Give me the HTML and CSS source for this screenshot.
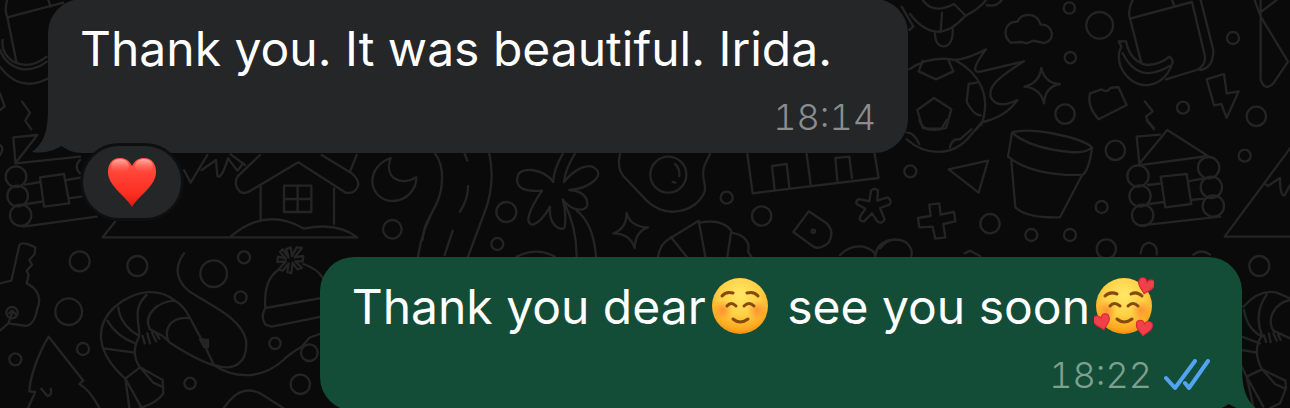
FILE: index.html
```
<!DOCTYPE html>
<html lang="en">
<head>
  <meta charset="UTF-8">
  <meta name="viewport" content="width=device-width, initial-scale=1">
  <title>Chat</title>
  <link rel="stylesheet" href="styles.css">
</head>
<body>
  <!-- doodle wallpaper -->
  <svg class="wallpaper" viewBox="0 0 3870 1224" preserveAspectRatio="xMidYMin slice" aria-hidden="true">
    <!-- left: mug, banana, cabin, snowy house, moon -->
    <g>
      <path d="M22 0Q12 30 22 52L50 190M22 52L190 8M145 0L152 20M8 120Q2 160 40 185Q90 210 140 170M0 150Q20 200 70 208Q110 210 140 185M0 200Q60 280 145 235M0 280L14 320L0 330M66 305L90 338L76 362L94 388"/>
      <path d="M46 485L40 412L112 405L46 490L240 470M75 554L120 546M200 540L245 532M80 612L125 605M205 595L245 590M70 680L290 650M120 532L192 522L208 610L132 620ZM240 480Q220 500 240 520M0 435Q14 445 0 465"/>
      <circle cx="48" cy="530" r="31"/><circle cx="53" cy="588" r="31"/><circle cx="62" cy="646" r="32"/>
      <path d="M552 510L572 548L622 465M605 510L648 480L652 528Q664 540 684 475M684 475L712 512L730 490M692 463L735 495M780 465L712 530Q700 555 720 575Q735 585 755 570L895 487L1035 577Q1065 585 1075 555Q1075 535 1055 520L965 465M782 555V662M1002 565V672M1050 515L1070 465M852 557H934V636H852ZM893 557V636M852 597H934"/>
      <path d="M345 665L308 712H1072Q1010 665 912 686Q800 620 694 708"/>
      <path d="M1172 474C1100 500 1100 585 1165 602C1220 610 1250 565 1249 532C1205 560 1150 535 1172 474Z"/>
      <circle cx="1177" cy="688" r="28"/>
      <path d="M1290 650Q1270 680 1268 720"/>
    </g>
    <!-- top right: turtle, football, stars, clouds, mug -->
    <g transform="translate(2640 0)">
      <path d="M65 20L100 80L88 90M90 42Q170 145 255 48Q300 25 318 0M128 0Q160 45 222 12M186 38L182 96M222 12L258 48M320 15Q350 22 365 0M165 98Q165 138 192 139Q220 136 218 85"/>
      <path d="M88 208Q150 165 225 180Q270 175 318 148Q260 225 305 214L432 184C350 235 325 260 332 290Q350 330 412 300Q380 350 304 368L290 388M225 180C300 220 335 290 304 375M128 182L116 214L168 238L220 214L206 182M112 330L162 294L214 328L198 384Q160 395 128 384ZM290 248L266 252L260 305Q280 345 302 346"/>
      <path d="M392 128C365 105 375 65 412 65C425 38 470 35 482 74C520 70 530 125 490 129L460 122L440 130L424 126Z"/>
      <circle cx="568" cy="24" r="17"/><circle cx="659" cy="76" r="40"/><circle cx="571" cy="173" r="17"/><circle cx="555" cy="342" r="29"/><circle cx="1059" cy="114" r="18"/><circle cx="909" cy="323" r="18"/><circle cx="1129" cy="349" r="29"/>
      <path d="M484 204Q495 250 540 252Q495 260 492 310Q482 265 433 260Q478 250 484 204ZM630 280L665 268Q680 280 692 264L715 261L740 315L656 358Q620 320 630 280ZM794 304L818 334L798 350L804 366L822 388"/>
      <path d="M758 0Q742 30 750 56L936 6M876 0L884 20M750 56L784 188M936 6L974 165Q980 195 950 210L858 238M962 0L1000 150Q1000 205 960 210M716 124H738Q750 185 800 195Q840 195 868 170Q882 180 876 192C850 270 760 280 722 200Q710 165 724 140ZM728 160Q775 255 868 198"/>
      <path d="M980 238L1032 222L1040 280L1076 274L1040 354L1024 312L1002 316ZM1124 0L1142 50L1224 185L1180 250Q1155 275 1142 240V0M1144 35L1190 0"/>
    </g>
    <!-- right middle: plant pot, cabin, mountain -->
    <g transform="translate(2640 360)">
      <path d="M80 38Q100 35 118 72M80 58C140 110 220 110 270 48L304 8L330 0M210 82Q215 55 240 58L274 28M118 0Q125 25 145 26H185L200 0"/>
      <circle cx="91" cy="154" r="18"/><circle cx="330" cy="311" r="29"/><circle cx="454" cy="345" r="18"/><circle cx="570" cy="345" r="18"/><circle cx="665" cy="261" r="18"/><circle cx="706" cy="91" r="29"/><circle cx="1094" cy="107" r="18"/><circle cx="679" cy="387" r="29"/>
      <path d="M206 148L324 122L296 218ZM1150 4M800 0L822 24"/>
      <path d="M396 38C450 20 600 50 636 82Q620 100 570 96Q450 85 396 38L384 110C440 155 530 168 610 164Q628 145 636 84M394 122L406 262Q440 295 540 292L606 166"/>
      <path d="M148 254L178 250L182 284L222 276L226 304L190 312L196 352L166 356L158 320L118 322L114 294L152 288ZM0 385Q30 345 75 365Q100 385 94 408M254 400L270 392L300 408"/>
      <path d="M778 130L770 50L840 44M774 136L862 30L984 108L774 136M784 316L1020 290M804 195L846 190M924 184L968 176M806 252L852 246M932 240L972 236M842 170L920 162L934 252L856 262ZM782 400Q785 370 808 368Q835 375 830 404M940 404Q965 385 990 404"/>
      <circle cx="774" cy="168" r="32"/><circle cx="780" cy="228" r="32"/><circle cx="788" cy="286" r="32"/><circle cx="986" cy="143" r="32"/><circle cx="994" cy="202" r="32"/><circle cx="1000" cy="258" r="32"/>
      <path d="M1230 85L1034 350H1230M1152 190L1164 198L1200 174Q1200 230 1214 226L1230 195"/>
    </g>
    <!-- middle strip: road, flower, egg, train, croissant -->
    <g transform="translate(1200 420)">
      <path d="M105 40C135 80 130 145 110 190Q65 270 54 350M268 42Q285 120 260 200L204 350M194 42L202 62M204 138Q205 175 180 215M158 272L134 345"/>
      <circle cx="319" cy="216" r="30"/><circle cx="292" cy="312" r="18"/><circle cx="980" cy="173" r="18"/><circle cx="1085" cy="228" r="29"/><circle cx="805" cy="104" r="54"/>
      <path d="M488 42Q460 90 460 126C430 85 365 80 354 105C340 150 385 155 426 152C380 220 375 255 400 254Q425 245 450 200C445 260 485 275 494 262Q500 220 488 178C520 220 565 215 562 190Q560 155 508 150C570 145 605 110 592 92C570 60 520 90 492 126Q495 90 524 42M492 188Q530 260 530 350M530 212Q580 250 588 350M350 350Q410 320 465 350"/>
      <path d="M660 42Q650 85 670 108L740 182C800 240 890 215 914 155C920 130 900 110 914 75L930 42M825 72Q840 85 838 108M818 126L826 128M680 218Q690 260 744 262Q705 275 704 324Q690 280 640 280Q680 265 680 218Z"/>
      <path d="M774 350Q780 310 812 294L896 242L916 350M812 290L860 350M900 248Q965 235 994 272L982 350M994 278Q1055 290 1044 335L1054 350"/>
      <path d="M1042 42L1058 160L1436 114L1424 42M1220 42L1232 134M1124 150L1116 78L1160 72L1168 142M1312 122L1306 54L1348 50L1356 114M1226 214L1280 250Q1305 275 1286 308Q1260 330 1240 320L1180 276ZM1320 345Q1350 315 1390 320Q1425 330 1426 348Q1430 310 1470 300"/>
      <circle cx="1240" cy="274" r="5"/>
      <path d="M1413 152Q1424 142 1434 152L1432 182L1462 172Q1478 180 1468 194L1440 204L1454 238Q1446 254 1432 244L1416 220L1392 244Q1376 244 1380 230L1396 206L1370 192Q1366 176 1382 178L1408 184Z"/>
    </g>
    <!-- bottom left: key, shrimp, hat, tree -->
    <g transform="translate(0 660)">
      <path d="M34 182L58 76Q65 62 106 82L104 102L88 120L96 134L80 152L86 165L80 190C115 205 125 240 112 265Q105 310 80 318L25 310L0 332M34 182L0 190M38 275L25 310M28 280Q35 265 46 282"/>
      <circle cx="36" cy="278" r="17"/><circle cx="239" cy="124" r="30"/><circle cx="412" cy="138" r="30"/><circle cx="206" cy="275" r="40"/><circle cx="249" cy="387" r="18"/><circle cx="46" cy="418" r="18"/><circle cx="641" cy="161" r="40"/><circle cx="732" cy="112" r="18"/><circle cx="722" cy="232" r="18"/><circle cx="570" cy="490" r="17"/><circle cx="825" cy="370" r="17"/><circle cx="901" cy="493" r="29"/><circle cx="928" cy="398" r="25"/>
      <path d="M84 564L106 516L88 514C90 470 115 400 146 350L250 482L238 492Q270 510 298 564M124 506L142 528Q158 525 152 506"/>
      <path d="M376 476C290 400 280 320 345 260C410 205 480 205 525 242C560 260 570 300 606 360L642 436Q590 420 510 368L488 348M376 476L420 442Q390 400 418 348M355 262Q360 315 418 348M322 302Q350 350 405 370M315 386L404 398M440 225C400 260 415 300 418 342M525 242C465 245 430 290 450 328L488 348M565 294C510 290 490 330 506 364M428 348L434 370M442 340L450 370M456 338L468 364M468 340L478 356M420 442L488 480L490 520Q470 550 420 564M376 476L388 564M376 476L424 562M420 442L460 488L486 500"/>
      <path d="M552 100C515 150 535 200 590 228C650 265 725 300 738 360C745 430 700 455 645 435M606 360L624 366L616 382M642 436C710 480 790 475 850 420Q870 400 905 380L930 352L960 342"/>
      <path class="filled" d="M600 358L624 360L624 382L612 380Z"/>
      <path d="M796 264Q790 180 835 150M910 132Q950 145 970 175M796 264L965 234M796 264Q780 290 796 314L815 320L965 290M672 564Q720 490 780 520L850 564"/>
      <!-- pompom -->
      <path d="M866 112L858 88L872 82L876 108L890 82L906 84L884 112L910 108L908 124L886 124L906 144L892 148L878 128L874 160L862 156L866 130L848 152L836 148L858 124L832 126L834 110L858 116L840 96L848 88Z"/>
    </g>
    <!-- bottom right: second shrimp -->
    <g transform="translate(3180 780)">
      <circle cx="598" cy="18" r="30"/>
      <path d="M550 140Q600 85 650 98L690 115M620 104Q580 160 606 226M690 120C640 130 620 180 640 212L690 235M552 150Q560 205 606 230M545 230L600 250M545 270L590 278M606 226Q575 270 606 328L560 350L540 310M612 226L618 246M626 220L632 246M640 220L650 242M654 224L662 240M606 328L676 362L678 384L660 430L630 444M606 328L645 372L676 386M560 350L580 440M560 350L610 440"/>
    </g>
  </svg>

  <main class="chat">
    <article class="bubble received">
      <svg class="tail" viewBox="0 0 34 44" aria-hidden="true">
        <path d="M16 0C16 22 12 34 0 43Q18 46 34 34V0Z"/>
      </svg>
      <p class="text">Thank you. It was beautiful. Irida.</p>
      <div class="meta"><time>18:14</time></div>
      <button class="reaction" type="button" aria-label="Heart reaction">
        <svg class="heart" viewBox="0 0 50 50" aria-hidden="true">
          <defs>
            <linearGradient id="heartFill" x1="0" y1="0" x2="0" y2="1">
              <stop offset="0" stop-color="#ff5549"/>
              <stop offset=".4" stop-color="#ff3f32"/>
              <stop offset=".75" stop-color="#fb2d20"/>
              <stop offset="1" stop-color="#d51d14"/>
            </linearGradient>
            <linearGradient id="heartShine" x1="0" y1="0" x2="0" y2="1">
              <stop offset="0" stop-color="#ffc3b8" stop-opacity=".85"/>
              <stop offset="1" stop-color="#ff6a5c" stop-opacity="0"/>
            </linearGradient>
          </defs>
          <path fill="url(#heartFill)" d="M25 9C22 3 18 1 13 1C5 1 1 7 1 15C1 29 17 37 25 50C33 37 49 29 49 15C49 7 45 1 37 1C32 1 28 3 25 9Z"/>
          <ellipse cx="13" cy="9" rx="9" ry="7" fill="url(#heartShine)"/>
          <ellipse cx="37" cy="9" rx="9" ry="7" fill="url(#heartShine)"/>
        </svg>
      </button>
    </article>

    <article class="bubble sent">
      <svg class="tail" viewBox="0 0 34 44" aria-hidden="true">
        <path d="M18 0C18 22 22 34 34 43Q16 46 0 34V0Z"/>
      </svg>
      <p class="text">Thank you dear<svg class="emoji" viewBox="0 0 60 60" role="img" aria-label="smiling face">
          <defs>
            <radialGradient id="face" cx=".5" cy=".3" r=".72">
              <stop offset="0" stop-color="#ffe867"/>
              <stop offset=".5" stop-color="#ffd045"/>
              <stop offset=".85" stop-color="#fba81f"/>
              <stop offset="1" stop-color="#e98a12"/>
            </radialGradient>
            <radialGradient id="blush">
              <stop offset="0" stop-color="#ff6a2a" stop-opacity=".6"/>
              <stop offset="1" stop-color="#ff7a2a" stop-opacity="0"/>
            </radialGradient>
          </defs>
          <circle cx="30" cy="30" r="28" fill="url(#face)"/>
          <circle cx="13" cy="34" r="10" fill="url(#blush)"/>
          <circle cx="47" cy="34" r="10" fill="url(#blush)"/>
          <g class="features">
            <path d="M12 20Q16 15 23 17M37 17Q44 15 48 20M17 30Q21 25 26 30M34 30Q39 25 44 30"/>
            <path d="M23 43Q30 49 38 43"/>
          </g>
        </svg> see you soon<svg class="emoji" viewBox="0 0 60 60" role="img" aria-label="smiling face with hearts">
          <defs>
            <path id="miniHeart" d="M0 -4C-2 -9 -9 -8 -8 -2C-8 2 -3 4 0 8C3 4 8 2 8 -2C9 -8 2 -9 0 -4Z"/>
          </defs>
          <circle cx="30" cy="30" r="28" fill="url(#face)"/>
          <circle cx="13" cy="34" r="10" fill="url(#blush)"/>
          <circle cx="47" cy="34" r="10" fill="url(#blush)"/>
          <g class="features">
            <path d="M11 20Q16 15 23 18M37 18Q43 15 48 20M16 30Q20 25 26 30M34 30Q39 25 44 30"/>
            <path d="M23 43Q30 49 38 43"/>
          </g>
          <g class="hearts">
            <use href="#miniHeart" transform="translate(52 10) rotate(14)"/>
            <use href="#miniHeart" transform="translate(8 46) rotate(-14)"/>
            <use href="#miniHeart" transform="translate(50 52) rotate(8)"/>
          </g>
        </svg></p>
      <div class="meta">
        <time>18:22</time>
        <svg class="ticks" viewBox="0 0 46 32" role="img" aria-label="Read">
          <path d="M2 19L11 29L31 2M21 24L25 29L44 2"/>
        </svg>
      </div>
    </article>
  </main>
</body>
</html>
```
FILE: styles.css
```
* {
  box-sizing: border-box;
  margin: 0;
  padding: 0;
}
body {
  position: relative;
  min-height: 100vh;
  background: #0a0a0a;
  color: #fff;
  font-family: Inter, "Liberation Sans", sans-serif;
  overflow: hidden;
}
.wallpaper {
  position: absolute;
  top: 0;
  left: 0;
  width: 100%;
  height: 100%;
  fill: none;
  stroke: #242425;
  stroke-width: 7;
  stroke-linecap: round;
  stroke-linejoin: round;
}
.wallpaper .filled {
  fill: #242425;
}
.chat {
  position: relative;
  display: flex;
  flex-direction: column;
  gap: 104px;
  height: 100vh;
  padding: 0 48px;
  margin-top: -1px;
}

/* bubbles */
.bubble {
  position: relative;
  flex: none;
  padding: 18px 32px 12px;
  border-radius: 34px;
}
.received {
  align-self: flex-start;
  background: #242628;
}
.sent {
  align-self: flex-end;
  background: #144d37;
}
.text {
  font-size: 48px;
  line-height: 64px;
  white-space: nowrap;
}
.received .text {
  padding-right: 44px;
}
.sent .text {
  padding-right: 52px;
}
.meta {
  display: flex;
  align-items: center;
  justify-content: flex-end;
  gap: 12px;
  height: 60px;
  padding-top: 12px;
  font-size: 36px;
  font-weight: 300;
  font-variant-numeric: tabular-nums;
}
.received .meta {
  color: #8b8c8e;
}
.sent .meta {
  color: #7fa08f;
}
.tail {
  position: absolute;
  bottom: 0;
  width: 34px;
  height: 44px;
}
.received .tail {
  left: -16px;
  fill: #242628;
}
.sent .tail {
  right: -16px;
  fill: #144d37;
}

/* heart under the first bubble */
.reaction {
  position: absolute;
  left: 32px;
  bottom: -68px;
  display: flex;
  align-items: center;
  justify-content: center;
  width: 104px;
  height: 78px;
  border: 3px solid #0e0f10;
  border-radius: 39px;
  background: #242628;
}
.heart {
  width: 50px;
  height: 50px;
}

.emoji {
  width: 60px;
  height: 60px;
  margin: 0 4px;
  vertical-align: -12px;
}
.features {
  fill: none;
  stroke: #854a0c;
  stroke-width: 3;
  stroke-linecap: round;
}
.hearts {
  fill: #f0404a;
  stroke: #d92533;
}
.ticks {
  width: 46px;
  height: 32px;
  fill: none;
  stroke: #53a4f0;
  stroke-width: 4;
  stroke-linecap: round;
  stroke-linejoin: round;
}
```
